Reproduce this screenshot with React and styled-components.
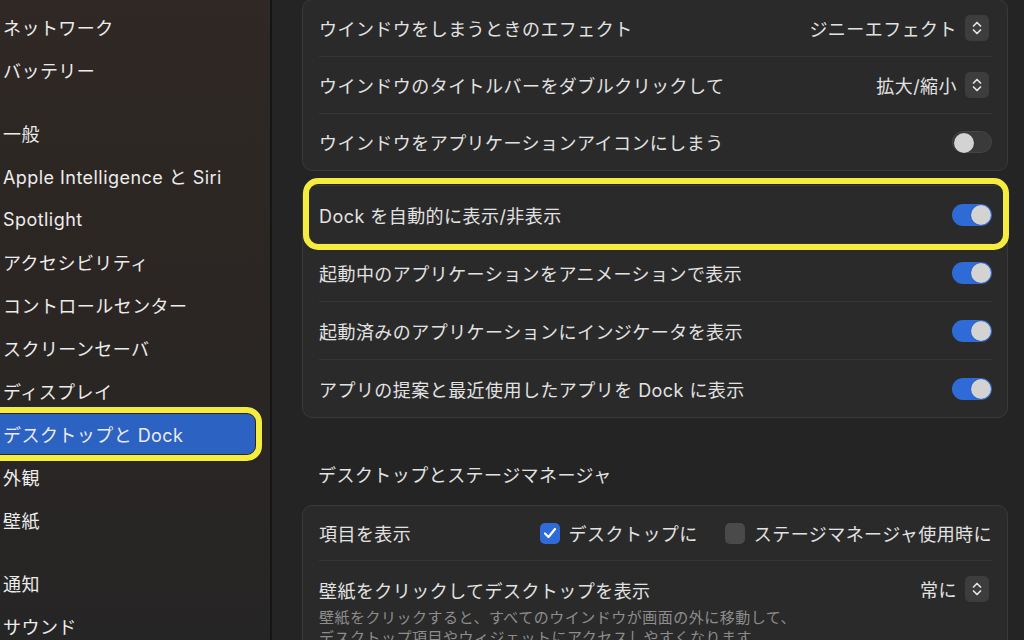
import React from "react";
import styled, { createGlobalStyle } from "styled-components";

const colors = {
  text: "#e2e2e2",
  sideText: "#ececec",
  dim: "#8d8d8d",
  blue: "#2f6bd6",
  select: "#2c62c2",
  yellow: "#f4ec3e",
  card: "#2a2a2a",
  border: "#393939",
  knob: "#d3d3d3",
};

const GlobalStyle = createGlobalStyle`
  html, body {
    margin: 0;
    padding: 0;
    background: #242424;
    overflow: hidden;
  }
  body {
    font-family: Inter, "Noto Sans CJK JP", sans-serif;
    letter-spacing: 0.45px;
    -webkit-font-smoothing: antialiased;
  }
`;

const Window = styled.div`
  display: flex;
  width: 1024px;
  height: 640px;
  overflow: hidden;
`;

const Sidebar = styled.div`
  width: 272px;
  flex-shrink: 0;
  padding-top: 7px;
  box-sizing: border-box;
  background: linear-gradient(180deg, #2f2824 0%, #2b2623 45%, #262525 100%);
  border-right: 2px solid #151515;
`;

const SideItem = styled.div`
  position: relative;
  width: 255px;
  height: 40px;
  margin-bottom: 3px;
  padding-left: 3px;
  box-sizing: border-box;
  display: flex;
  align-items: center;
  font-size: 18px;
  color: ${colors.sideText};
  border-radius: 0 8px 8px 0;
  background: ${(p) => (p.$active ? colors.select : "transparent")};
  outline: ${(p) => (p.$active ? `6px solid ${colors.yellow}` : "none")};
  outline-offset: 1px;
`;

const SideGap = styled.div`
  height: 20px;
`;

const Content = styled.div`
  flex: 1;
  padding: 0 16px 0 30px;
  background: #242424;
`;

const Card = styled.div`
  background: ${colors.card};
  border: 1px solid ${colors.border};
  border-radius: 10px;
  margin-top: ${(p) => p.$top || 0}px;
`;

const Row = styled.div`
  position: relative;
  height: ${(p) => p.$h || 57}px;
  margin: 0 15px 0 16px;
  display: flex;
  align-items: ${(p) => (p.$top ? "flex-start" : "center")};
  justify-content: space-between;
  font-size: 18px;
  color: ${colors.text};
  & + & {
    border-top: 1px solid #363636;
  }
  ${(p) =>
    p.$marked &&
    `
    &::after {
      content: "";
      position: absolute;
      left: -16px;
      right: -17px;
      top: -8px;
      bottom: -7px;
      border: 6px solid ${colors.yellow};
      border-radius: 15px;
      pointer-events: none;
    }
  `}
`;

const Label = styled.span`
  white-space: nowrap;
`;

const TextBlock = styled.div`
  padding-top: 16px;
`;

const SubText = styled.div`
  margin-top: 5px;
  font-size: 15px;
  line-height: 20px;
  letter-spacing: 0.5px;
  color: ${colors.dim};
  white-space: nowrap;
`;

const Popup = styled.div`
  display: flex;
  align-items: center;
  gap: 8px;
  margin-right: 3px;
  padding-top: ${(p) => (p.$top ? "15px" : "0")};
`;

const Stepper = styled.div`
  width: 24px;
  height: 26px;
  border-radius: 5px;
  background: #3d3d3d;
  display: flex;
  align-items: center;
  justify-content: center;
`;

const Toggle = styled.div`
  width: 40px;
  height: 22px;
  border-radius: 11px;
  box-sizing: border-box;
  padding: 1px;
  display: flex;
  justify-content: ${(p) => (p.$on ? "flex-end" : "flex-start")};
  background: ${(p) => (p.$on ? colors.blue : "#3a3a3a")};
  border: ${(p) => (p.$on ? "none" : "1px solid #444")};
`;

const Knob = styled.div`
  width: 20px;
  height: 20px;
  border-radius: 50%;
  background: ${colors.knob};
  box-shadow: 0 0 1px rgba(0, 0, 0, 0.5);
`;

const SectionTitle = styled.div`
  margin: 46px 0 17px 16px;
  font-size: 18px;
  line-height: 24px;
  color: ${colors.text};
`;

const Options = styled.div`
  display: flex;
  align-items: center;
  gap: 27px;
`;

const Option = styled.label`
  display: flex;
  align-items: center;
  gap: 9px;
  white-space: nowrap;
`;

const Box = styled.div`
  width: 20px;
  height: 21px;
  border-radius: 5px;
  background: ${(p) => (p.$checked ? colors.blue : "#4a4a4a")};
  display: flex;
  align-items: center;
  justify-content: center;
`;

function Chevrons() {
  return (
    <svg width="10" height="16" viewBox="0 0 10 16" fill="none">
      <path d="M1.5 6 L5 2.5 L8.5 6" stroke="#e4e4e4" strokeWidth="1.7" strokeLinecap="round" strokeLinejoin="round" />
      <path d="M1.5 10 L5 13.5 L8.5 10" stroke="#e4e4e4" strokeWidth="1.7" strokeLinecap="round" strokeLinejoin="round" />
    </svg>
  );
}

function Check() {
  return (
    <svg width="14" height="12" viewBox="0 0 14 12" fill="none">
      <path d="M2 6.5 L5.5 10 L12 2" stroke="#fff" strokeWidth="2.2" strokeLinecap="round" strokeLinejoin="round" />
    </svg>
  );
}

const sidebar = [
  "ネットワーク",
  "バッテリー",
  null,
  "一般",
  "Apple Intelligence と Siri",
  "Spotlight",
  "アクセシビリティ",
  "コントロールセンター",
  "スクリーンセーバ",
  "ディスプレイ",
  "デスクトップと Dock",
  "外観",
  "壁紙",
  null,
  "通知",
  "サウンド",
];

const dockRows = [
  "Dock を自動的に表示/非表示",
  "起動中のアプリケーションをアニメーションで表示",
  "起動済みのアプリケーションにインジケータを表示",
  "アプリの提案と最近使用したアプリを Dock に表示",
];

export default function App() {
  return (
    <>
      <GlobalStyle />
      <Window>
        <Sidebar>
          {sidebar.map((item, i) =>
            item === null ? (
              <SideGap key={i} />
            ) : (
              <SideItem key={i} $active={item === "デスクトップと Dock"}>
                {item}
              </SideItem>
            )
          )}
        </Sidebar>
        <Content>
          <Card $top={-1}>
            <Row $h={56}>
              <Label>ウインドウをしまうときのエフェクト</Label>
              <Popup>
                ジニーエフェクト
                <Stepper>
                  <Chevrons />
                </Stepper>
              </Popup>
            </Row>
            <Row $h={56}>
              <Label>ウインドウのタイトルバーをダブルクリックして</Label>
              <Popup>
                拡大/縮小
                <Stepper>
                  <Chevrons />
                </Stepper>
              </Popup>
            </Row>
            <Row $h={56}>
              <Label>ウインドウをアプリケーションアイコンにしまう</Label>
              <Toggle>
                <Knob />
              </Toggle>
            </Row>
          </Card>

          <Card $top={14}>
            {dockRows.map((label, i) => (
              <Row key={i} $marked={i === 0}>
                <Label>{label}</Label>
                <Toggle $on>
                  <Knob />
                </Toggle>
              </Row>
            ))}
          </Card>

          <SectionTitle>デスクトップとステージマネージャ</SectionTitle>

          <Card>
            <Row $h={54}>
              <Label>項目を表示</Label>
              <Options>
                <Option>
                  <Box $checked>
                    <Check />
                  </Box>
                  デスクトップに
                </Option>
                <Option>
                  <Box />
                  ステージマネージャ使用時に
                </Option>
              </Options>
            </Row>
            <Row $h={120} $top>
              <TextBlock>
                <Label>壁紙をクリックしてデスクトップを表示</Label>
                <SubText>
                  壁紙をクリックすると、すべてのウインドウが画面の外に移動して、
                  <br />
                  デスクトップ項目やウィジェットにアクセスしやすくなります。
                </SubText>
              </TextBlock>
              <Popup $top>
                常に
                <Stepper>
                  <Chevrons />
                </Stepper>
              </Popup>
            </Row>
          </Card>
        </Content>
      </Window>
    </>
  );
}
